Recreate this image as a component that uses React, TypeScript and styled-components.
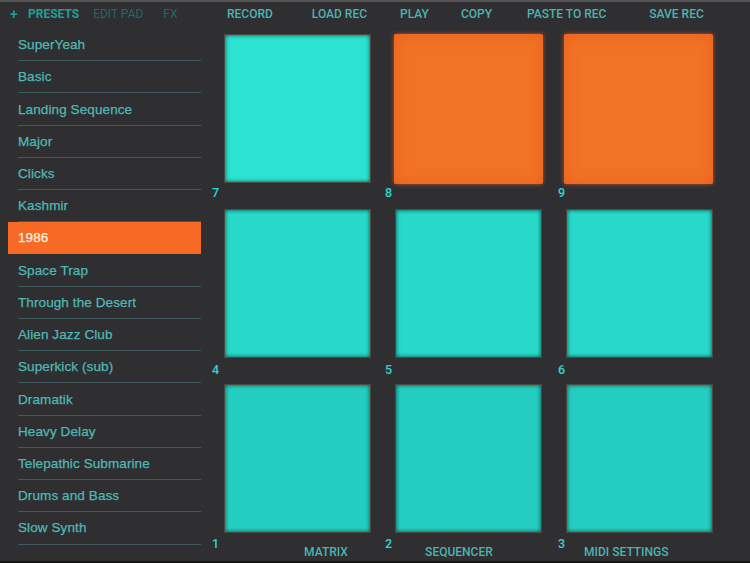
import React from "react";
import styled, { createGlobalStyle } from "styled-components";

const presets = [
  "SuperYeah",
  "Basic",
  "Landing Sequence",
  "Major",
  "Clicks",
  "Kashmir",
  "1986",
  "Space Trap",
  "Through the Desert",
  "Alien Jazz Club",
  "Superkick (sub)",
  "Dramatik",
  "Heavy Delay",
  "Telepathic Submarine",
  "Drums and Bass",
  "Slow Synth",
];

const actions = [
  { label: "RECORD", gap: 0 },
  { label: "LOAD REC", gap: 39 },
  { label: "PLAY", gap: 33 },
  { label: "COPY", gap: 32 },
  { label: "PASTE TO REC", gap: 35 },
  { label: "SAVE REC", gap: 43 },
];

const rows = [
  { color: "#2ce3d2", active: [false, true, true], numbers: [7, 8, 9], numberTop: 3 },
  { color: "#29d9ca", active: [false, false, false], numbers: [4, 5, 6], numberTop: 5 },
  { color: "#23cec0", active: [false, false, false], numbers: [1, 2, 3], numberTop: 4 },
];

const footer = [
  { label: "MATRIX", offset: 85 },
  { label: "SEQUENCER", offset: 33 },
  { label: "MIDI SETTINGS", offset: 19 },
];

const App = () => (
  <Page>
    <GlobalStyle />
    <Header>
      <Tabs>
        <Plus>+</Plus>
        <Tab $color="#1f9f9a" $bold>
          PRESETS
        </Tab>
        <Tab $color="#1f6a6b" $gap={14}>
          EDIT PAD
        </Tab>
        <Tab $color="#1f6a6b" $gap={20}>
          FX
        </Tab>
      </Tabs>
      <Actions>
        {actions.map((action) => (
          <Action key={action.label} $gap={action.gap}>
            {action.label}
          </Action>
        ))}
      </Actions>
    </Header>
    <Body>
      <PresetList>
        {presets.map((name) => (
          <Preset key={name} $active={name === "1986"}>
            {name}
          </Preset>
        ))}
      </PresetList>
      <Board>
        {rows.map((row, i) => (
          <React.Fragment key={row.color}>
            <PadRow>
              {row.active.map((active, j) => (
                <Pad key={j} $active={active} $color={row.color} />
              ))}
            </PadRow>
            <NumberRow $last={i === 2}>
              {row.numbers.map((n, j) => (
                <NumberCell key={n}>
                  <PadNumber $top={row.numberTop}>{n}</PadNumber>
                  {i === 2 && <FooterLabel $offset={footer[j].offset}>{footer[j].label}</FooterLabel>}
                </NumberCell>
              ))}
            </NumberRow>
          </React.Fragment>
        ))}
      </Board>
    </Body>
  </Page>
);

const GlobalStyle = createGlobalStyle`
  html,
  body {
    margin: 0;
    padding: 0;
    background: #2f2f31;
  }
`;

const Page = styled.div`
  box-sizing: border-box;
  display: flex;
  flex-direction: column;
  width: 750px;
  height: 563px;
  overflow: hidden;
  background: #2f2f31;
  border-top: 2px solid #555557;
  border-bottom: 2px solid #161617;
  font-family: Roboto, "Liberation Sans", sans-serif;
`;

const Header = styled.div`
  box-sizing: border-box;
  display: flex;
  align-items: center;
  height: 27px;
  padding-bottom: 4px;
  flex: none;
`;

const Tabs = styled.div`
  display: flex;
  align-items: center;
  width: 227px;
  flex: none;
  padding-left: 10px;
  box-sizing: border-box;
`;

const Plus = styled.span`
  width: 18px;
  font-size: 14px;
  font-weight: 500;
  color: #1f9f9a;
`;

const Tab = styled.span<{ $color: string; $bold?: boolean; $gap?: number }>`
  margin-left: ${(p) => p.$gap ?? 0}px;
  font-size: 12px;
  font-weight: ${(p) => (p.$bold ? 700 : 400)};
  color: ${(p) => p.$color};
`;

const Actions = styled.div`
  display: flex;
  align-items: center;
`;

const Action = styled.span<{ $gap: number }>`
  margin-left: ${(p) => p.$gap}px;
  font-size: 12px;
  font-weight: 500;
  color: #4db3b1;
`;

const Body = styled.div`
  display: flex;
  flex: 1;
  min-height: 0;
`;

const PresetList = styled.ul`
  width: 201px;
  flex: none;
  margin: 0;
  padding: 0;
  list-style: none;
`;

const Preset = styled.li<{ $active: boolean }>`
  box-sizing: border-box;
  display: flex;
  align-items: center;
  height: 32.23px;
  margin-left: ${(p) => (p.$active ? 8 : 18)}px;
  padding-left: ${(p) => (p.$active ? 10 : 0)}px;
  font-family: "Liberation Sans", Arial, sans-serif;
  font-size: 13.5px;
  letter-spacing: 0.1px;
  -webkit-text-stroke: 0.25px currentColor;
  color: ${(p) => (p.$active ? "#fff1e2" : "#4fb8b5")};
  background: ${(p) => (p.$active ? "#f66a25" : "transparent")};
  background-clip: padding-box;
  border-bottom: 1px solid ${(p) => (p.$active ? "transparent" : "#3f5a5e")};
`;

const Board = styled.div`
  display: flex;
  flex-direction: column;
  flex: 1;
  padding: 6px 0 0 10px;
`;

const PadRow = styled.div`
  display: flex;
  gap: 26px;
  height: 147px;
  flex: none;
  padding-left: 14px;
`;

const Pad = styled.div<{ $active: boolean; $color: string }>`
  box-sizing: border-box;
  flex: none;
  width: ${(p) => (p.$active ? 149 : 145)}px;
  height: ${(p) => (p.$active ? 150 : 147)}px;
  margin: ${(p) => (p.$active ? "-1px -2px -2px -2px" : "0")};
  background: ${(p) => (p.$active ? "#f17325" : p.$color)};
  border-radius: ${(p) => (p.$active ? 2 : 0)}px;
  box-shadow: ${(p) =>
    p.$active
      ? "0 0 4px rgba(246, 106, 37, 0.7), inset 0 0 14px rgba(232, 88, 28, 0.75)"
      : "0 0 0 1px #4c4842, inset 0 0 4px rgba(10, 50, 48, 0.9)"};

  &:nth-child(3) {
    margin-left: ${(p) => (p.$active ? -3 : 0)}px;
    margin-right: ${(p) => (p.$active ? -1 : 0)}px;
  }
`;

const NumberRow = styled.div<{ $last: boolean }>`
  display: grid;
  grid-template-columns: repeat(3, 173px);
  height: ${(p) => (p.$last ? 29 : 28)}px;
  flex: none;
`;

const NumberCell = styled.div`
  display: flex;
  align-items: flex-start;
`;

const PadNumber = styled.span<{ $top: number }>`
  margin-top: ${(p) => p.$top}px;
  padding-left: 1px;
  font-size: 12.5px;
  font-weight: 500;
  color: #2fd6d8;
`;

const FooterLabel = styled.span<{ $offset: number }>`
  margin: 13px 0 0 ${(p) => p.$offset}px;
  font-size: 12px;
  font-weight: 500;
  white-space: nowrap;
  color: #4db3b1;
`;

export default App;
